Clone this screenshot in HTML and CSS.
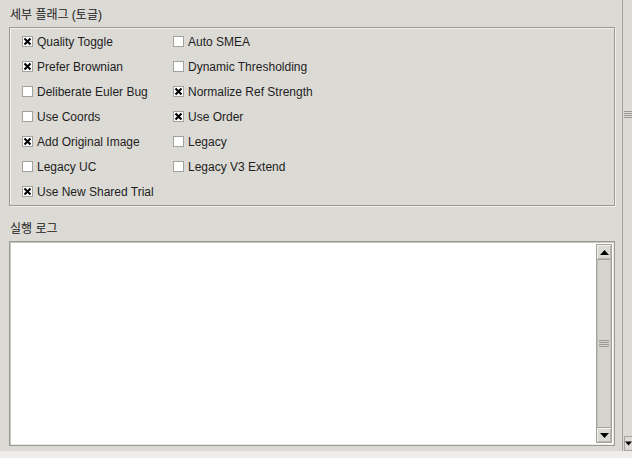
FILE: index.html
```html
<!DOCTYPE html>
<html lang="ko">
<head>
<meta charset="utf-8">
<title>세부 플래그</title>
<link rel="stylesheet" href="styles.css">
</head>
<body>
<div class="window">
  <div class="main">
    <div class="section-title">세부 플래그 (토글)</div>
    <div class="frame flags">
      <label class="flag"><span class="box on"><svg viewBox="0 0 9 9" width="9" height="9"><path d="M1.5 1.5L7.5 7.5M7.5 1.5L1.5 7.5"/></svg></span>Quality Toggle</label>
      <label class="flag"><span class="box"></span>Auto SMEA</label>
      <label class="flag"><span class="box on"><svg viewBox="0 0 9 9" width="9" height="9"><path d="M1.5 1.5L7.5 7.5M7.5 1.5L1.5 7.5"/></svg></span>Prefer Brownian</label>
      <label class="flag"><span class="box"></span>Dynamic Thresholding</label>
      <label class="flag"><span class="box"></span>Deliberate Euler Bug</label>
      <label class="flag"><span class="box on"><svg viewBox="0 0 9 9" width="9" height="9"><path d="M1.5 1.5L7.5 7.5M7.5 1.5L1.5 7.5"/></svg></span>Normalize Ref Strength</label>
      <label class="flag"><span class="box"></span>Use Coords</label>
      <label class="flag"><span class="box on"><svg viewBox="0 0 9 9" width="9" height="9"><path d="M1.5 1.5L7.5 7.5M7.5 1.5L1.5 7.5"/></svg></span>Use Order</label>
      <label class="flag"><span class="box on"><svg viewBox="0 0 9 9" width="9" height="9"><path d="M1.5 1.5L7.5 7.5M7.5 1.5L1.5 7.5"/></svg></span>Add Original Image</label>
      <label class="flag"><span class="box"></span>Legacy</label>
      <label class="flag"><span class="box"></span>Legacy UC</label>
      <label class="flag"><span class="box"></span>Legacy V3 Extend</label>
      <label class="flag"><span class="box on"><svg viewBox="0 0 9 9" width="9" height="9"><path d="M1.5 1.5L7.5 7.5M7.5 1.5L1.5 7.5"/></svg></span>Use New Shared Trial</label>
    </div>
    <div class="section-title log-title">실행 로그</div>
    <div class="frame log">
      <div class="log-text"></div>
      <div class="sb">
        <div class="sb-btn"><svg viewBox="0 0 9 5" width="9" height="5"><path d="M0 5L4.5 0L9 5Z"/></svg></div>
        <div class="sb-trough"><div class="grip"><i></i><i></i><i></i><i></i></div></div>
        <div class="sb-btn"><svg viewBox="0 0 9 5" width="9" height="5"><path d="M0 0L9 0L4.5 5Z"/></svg></div>
      </div>
    </div>
  </div>
  <div class="page-sb">
    <div class="page-trough"><div class="grip page-grip"><i></i><i></i><i></i><i></i></div></div>
    <div class="page-btn"><svg viewBox="0 0 9 5" width="9" height="5"><path d="M0 0L9 0L4.5 5Z"/></svg></div>
  </div>
</div>
<div class="bottom-band"></div>
</body>
</html>
```

FILE: styles.css
```css
html, body {
  margin: 0;
  padding: 0;
}
body {
  width: 632px;
  height: 458px;
  overflow: hidden;
  background: #dcdad5;
  font-family: "Liberation Sans", "Noto Sans CJK KR", sans-serif;
  font-size: 12px;
  color: #1e1e1e;
}
.window {
  display: flex;
  height: 451px;
}
.main {
  width: 622px;
  display: flex;
  flex-direction: column;
}
.section-title {
  padding: 8px 0 5px 10px;
  line-height: 14px;
  height: 14px;
  color: #202020;
}
.log-title {
  padding-top: 16px;
  padding-bottom: 5px;
}
.frame {
  margin-left: 9px;
  width: 606px;
  border: 1px solid #9b9993;
  box-shadow: inset 1px 1px 0 #f2f1ee, 1px 1px 0 #f2f1ee;
}
.flags {
  height: 177px;
  box-sizing: border-box;
  height: 179px;
  padding: 1px 0 0 12px;
  display: grid;
  grid-template-columns: 151px 1fr;
  grid-auto-rows: 25px;
  align-content: start;
}
.flag {
  display: flex;
  align-items: center;
  gap: 4px;
  white-space: nowrap;
}
.box {
  width: 11px;
  height: 11px;
  box-sizing: border-box;
  border: 1px solid #a3a19b;
  background: #ffffff;
  display: flex;
  align-items: center;
  justify-content: center;
  flex: none;
}
.box svg path {
  stroke: #000;
  stroke-width: 2.1;
  fill: none;
}
.log {
  margin-top: 0;
  height: 205px;
  box-sizing: border-box;
  display: flex;
  background: #ffffff;
  border-color: #9b9993;
  box-shadow: inset 1px 1px 0 #c9c7c1, inset -1px -1px 0 #ecebe8;
  padding: 2px 2px 2px 3px;
}
.log-text {
  flex: 1;
  background: #ffffff;
}
.sb {
  width: 16px;
  display: flex;
  flex-direction: column;
  background: #dcdad5;
  box-sizing: border-box;
  border: 1px solid #a5a39d;
}
.sb-btn {
  height: 14px;
  flex: none;
  display: flex;
  align-items: center;
  justify-content: center;
  background: #dcdad5;
  box-shadow: inset 1px 1px 0 #f0efec, inset -1px -1px 0 #b7b5af;
  border-bottom: 1px solid #a5a39d;
}
.sb-btn:last-child {
  border-bottom: none;
  border-top: 1px solid #a5a39d;
}
.sb-btn svg path, .page-btn svg path {
  fill: #000;
}
.sb-trough {
  flex: 1;
  display: flex;
  align-items: center;
  justify-content: center;
  background: #d6d4cf;
  border-left: 1px solid #c2c0ba;
  border-right: 1px solid #c2c0ba;
}
.grip {
  display: flex;
  flex-direction: column;
  gap: 1px;
  width: 10px;
}
.grip i {
  display: block;
  height: 1px;
  background: #9b9993;
}
.page-sb {
  width: 10px;
  border-left: 1px solid #a3a19b;
  box-sizing: border-box;
  display: flex;
  flex-direction: column;
  padding-left: 1px;
}
.page-trough {
  flex: 1;
  padding-top: 111px;
}
.page-grip {
  width: 8px;
}
.page-btn {
  height: 15px;
  display: flex;
  align-items: center;
  justify-content: center;
  border: 1px solid #a5a39d;
  border-right: none;
  box-sizing: border-box;
  background: #dcdad5;
}
.bottom-band {
  height: 7px;
  background: #eeedeb;
}
```
